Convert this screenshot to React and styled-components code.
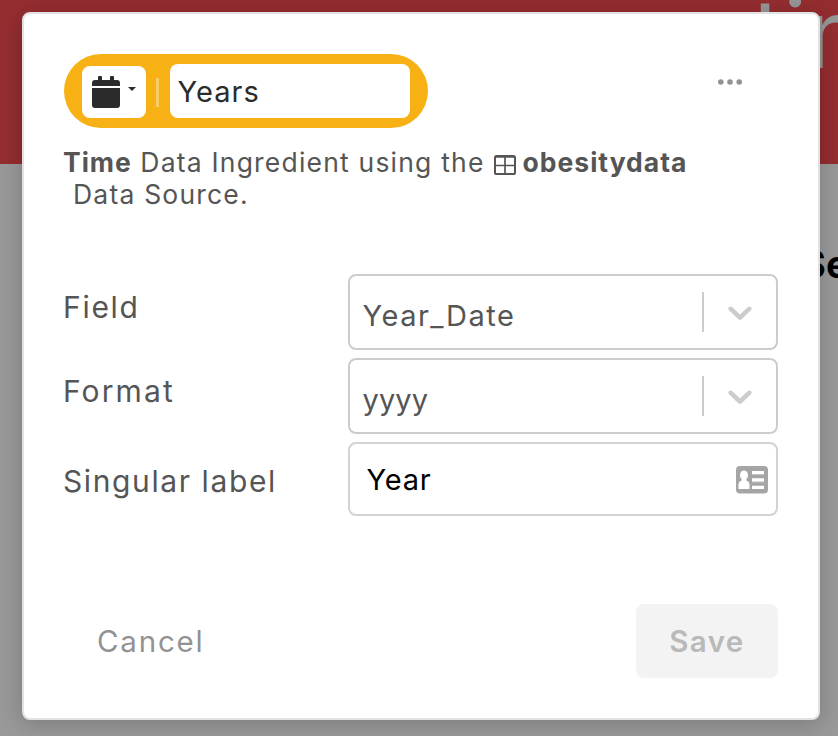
import React from "react";
import styled, { createGlobalStyle } from "styled-components";

const GlobalStyle = createGlobalStyle`
  * { box-sizing: border-box; }
  body { margin: 0; background: #999; overflow: hidden; }
  button, input { font: inherit; letter-spacing: inherit; color: inherit; border: 0; margin: 0; padding: 0; background: none; outline: 0; }
  svg { display: block; flex: none; }
`;

const Page = styled.div`
  position: relative;
  width: 838px;
  height: 736px;
  overflow: hidden;
  background: #999;
  font-family: "Inter", "Open Sans", sans-serif;
`;

const Banner = styled.header`
  height: 164px;
  padding-left: 752px;
  background: #942d30;
  color: #979797;
  font-size: 96px;
  line-height: 66px;
  white-space: nowrap;
  overflow: hidden;
`;

const SectionTitle = styled.h2`
  margin: 76px 0 0 801px;
  color: #000;
  font-size: 38px;
  line-height: 48px;
  font-weight: 700;
  white-space: nowrap;
`;

const Dialog = styled.section`
  position: absolute;
  left: 22px;
  top: 12px;
  width: 798px;
  height: 708px;
  padding: 40px;
  display: flex;
  flex-direction: column;
  background: #fff;
  border: 2px solid #e2e2e2;
  border-radius: 8px;
  box-shadow: 0 4px 24px rgba(0, 0, 0, 0.2);
  color: #555;
`;

const TopRow = styled.div`
  display: flex;
  justify-content: space-between;
  height: 74px;
`;

const Pill = styled.div`
  display: flex;
  align-items: flex-end;
  width: 364px;
  height: 74px;
  padding: 10px 18px;
  border-radius: 37px;
  background: #f8b114;
  color: #2b2b2b;
`;

const IconButton = styled.button`
  display: flex;
  align-items: center;
  width: 64px;
  height: 52px;
  padding-left: 10px;
  border-radius: 8px;
  background: #fff;
`;

const PillDivider = styled.span`
  width: 3px;
  height: 29px;
  margin: 0 11px 11px 10px;
  background: rgba(255, 255, 255, 0.35);
`;

const NameInput = styled.input`
  && {
    width: 240px;
    height: 54px;
    padding: 0 7.5px;
    border-radius: 8px;
    background: #fff;
    font-size: 29px;
    letter-spacing: 1.04px;
  }
`;

const MoreButton = styled.button`
  height: 56px;
  padding-right: 36px;
`;

const Description = styled.div`
  margin-top: 18px;
  margin-bottom: 64px;
  font-size: 26.5px;
  line-height: 32px;
  letter-spacing: 1.2px;
  white-space: nowrap;
`;

const Line = styled.div`
  display: flex;
  height: 32px;
  padding-left: ${(p) => p.$indent || 0}px;
  svg { margin: 9px 7px 0 9px; }
`;

const Strong = styled.strong`
  font-weight: 700;
  letter-spacing: 1px;
  margin-left: ${(p) => p.$shift || 0}px;
  margin-right: ${(p) => p.$gap || 0}px;
`;

const Form = styled.div`
  display: flex;
  flex-direction: column;
  gap: 8px;
`;

const Row = styled.div`
  display: flex;
  justify-content: space-between;
  height: ${(p) => p.$height}px;
`;

const Label = styled.label`
  margin-left: -1px;
  padding-top: ${(p) => p.$top}px;
  font-size: 30px;
  line-height: 36px;
  letter-spacing: ${(p) => p.$spacing}px;
`;

const Field = styled.div`
  display: flex;
  align-items: center;
  width: 430px;
  height: 100%;
  border: 2px solid ${(p) => p.$border || "#ccc"};
  border-radius: 8px;
`;

const Value = styled.span`
  flex: 1;
  padding: 7px 0 0 12.5px;
  font-size: 29px;
  letter-spacing: ${(p) => p.$spacing}px;
`;

const Separator = styled.span`
  width: 2px;
  height: 40px;
  margin-right: 16px;
  background: #ccc;
`;

const Arrow = styled.svg`
  width: 40px;
  height: 40px;
  margin-right: 16px;
  fill: #ccc;
`;

const TextInput = styled.input`
  && {
    flex: 1;
    min-width: 0;
    height: 100%;
    padding-left: 16.5px;
    color: #000;
    font-size: 29px;
    letter-spacing: 0.8px;
  }
`;

const ContactSvg = styled.svg`
  margin: 2px 8px 0 0;
`;

const Footer = styled.footer`
  display: flex;
  justify-content: space-between;
  margin-top: 88px;
  height: 74px;
  font-size: 29.5px;
`;

const CancelButton = styled.button`
  && {
    padding-left: 33px;
    color: #929292;
    letter-spacing: 1.8px;
  }
`;

const SaveButton = styled.button`
  && {
    width: 142px;
    border-radius: 8px;
    background: #f3f3f3;
    color: #b9b9b9;
    font-weight: 600;
    letter-spacing: 1.4px;
  }
`;

const CalendarIcon = () => (
  <svg width="46" height="32" viewBox="0 0 46 32" fill="#2b2b2b">
    <path d="M6 4V1a1 1 0 0 1 1-1h2a1 1 0 0 1 1 1v3h8V1a1 1 0 0 1 1-1h2a1 1 0 0 1 1 1v3h3a3 3 0 0 1 3 3v3H0V7a3 3 0 0 1 3-3zM0 12h28v17a3 3 0 0 1-3 3H3a3 3 0 0 1-3-3z" transform="translate(0 0)" />
    <path d="M36 11h8l-4 4z" />
  </svg>
);

const MoreIcon = () => (
  <svg width="24" height="6" viewBox="0 0 24 6" fill="#929292">
    <circle cx="2.8" cy="3" r="2.8" />
    <circle cx="12" cy="3" r="2.8" />
    <circle cx="21.2" cy="3" r="2.8" />
  </svg>
);

const TableIcon = () => (
  <svg width="22" height="20" viewBox="0 0 22 20" fill="none" stroke="#555">
    <rect x="1" y="1" width="20" height="18" rx="1.6" strokeWidth="2" />
    <path d="M1 2h20M11 2v17M1 10.5h20" strokeWidth="1.7" />
  </svg>
);

const ContactIcon = () => (
  <ContactSvg width="32" height="28" viewBox="0 0 32 28">
    <rect width="32" height="27.5" rx="4" fill="#a5a5a5" />
    <path d="M16 8h12v1H16zM16 15.5h12v1H16z" fill="#c4c4c4" />
    <path d="M16 5h12v3H16zM16 12.3h12v3.2H16zM16 19.8h12V23H16z" fill="#fff" />
    <path
      d="M8 4.5c2.500 0 4 1.900 4 4.500 0 1.900-.7 3.400-1.700 4.300v1.200c2 .6 3.200 2 3.200 4.500V23h-11v-4c0-2.500 1.200-3.900 3.200-4.500v-1.200C4.700 12.400 4 10.900 4 9c0-2.600 1.500-4.500 4-4.500z"
      fill="#fff"
    />
  </ContactSvg>
);

const Select = ({ value, spacing }) => (
  <Field>
    <Value $spacing={spacing}>{value}</Value>
    <Separator />
    <Arrow viewBox="0 0 20 20">
      <path d="M4.516 7.548c0.436-0.446 1.043-0.481 1.576 0l3.908 3.747 3.908-3.747c0.533-0.481 1.141-0.446 1.574 0 0.436 0.445 0.408 1.197 0 1.615-0.406 0.418-4.695 4.502-4.695 4.502-0.217 0.223-0.502 0.335-0.787 0.335s-0.57-0.112-0.789-0.335c0 0-4.287-4.084-4.695-4.502s-0.436-1.17 0-1.615z" />
    </Arrow>
  </Field>
);

export default function App() {
  return (
    <Page>
      <GlobalStyle />
      <Banner>tin</Banner>
      <SectionTitle>Se</SectionTitle>
      <Dialog>
        <TopRow>
          <Pill>
            <IconButton aria-label="Type">
              <CalendarIcon />
            </IconButton>
            <PillDivider />
            <NameInput defaultValue="Years" />
          </Pill>
          <MoreButton aria-label="More">
            <MoreIcon />
          </MoreButton>
        </TopRow>
        <Description>
          <Line>
            <Strong $shift={-1} $gap={8.5}>Time</Strong>
            <span>Data Ingredient using the</span>
            <TableIcon />
            <Strong>obesitydata</Strong>
          </Line>
          <Line $indent={9}>Data Source.</Line>
        </Description>
        <Form>
          <Row $height={76}>
            <Label $top={15} $spacing={1.7}>Field</Label>
            <Select value="Year_Date" spacing={1.5} />
          </Row>
          <Row $height={76}>
            <Label $top={15} $spacing={2.1}>Format</Label>
            <Select value="yyyy" spacing={0.1} />
          </Row>
          <Row $height={74}>
            <Label $top={21} $spacing={1.6}>Singular label</Label>
            <Field $border="#d3d3d3">
              <TextInput defaultValue="Year" />
              <ContactIcon />
            </Field>
          </Row>
        </Form>
        <Footer>
          <CancelButton>Cancel</CancelButton>
          <SaveButton>Save</SaveButton>
        </Footer>
      </Dialog>
    </Page>
  );
}
